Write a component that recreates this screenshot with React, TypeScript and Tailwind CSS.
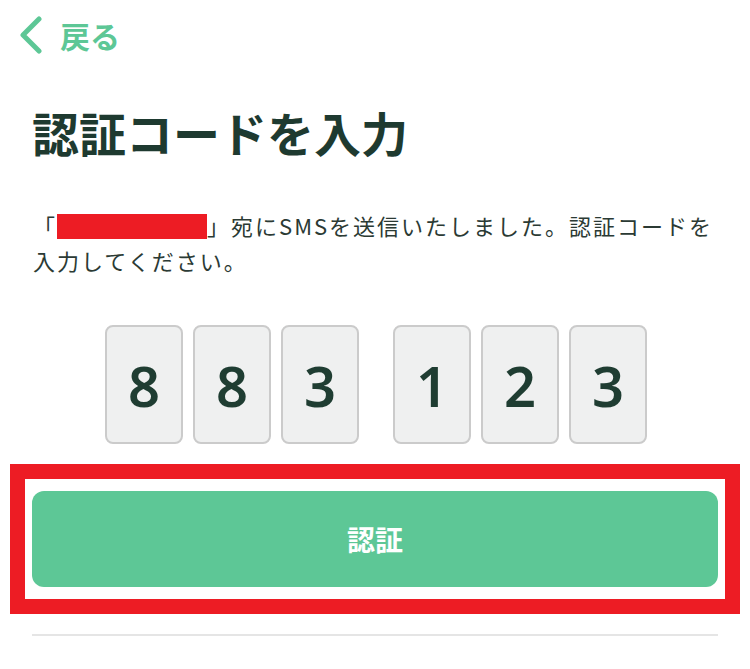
import React from "react";

const JP = { fontFamily: '"Noto Sans CJK JP", "Noto Sans", sans-serif' };

export default function App() {
  const first = ["8", "8", "3"];
  const second = ["1", "2", "3"];

  const DigitBox = ({ d }: { d: string }) => (
    <div
      className="w-[78px] h-[119px] bg-[#eff0f0] border-2 border-[#cbcbcb] rounded-[8px] flex items-center justify-center text-[56px] font-semibold text-[#1f3d32]"
      style={{ fontFamily: '"Noto Sans", sans-serif' }}
    >
      {d}
    </div>
  );

  return (
    <div className="w-[750px] h-[669px] bg-white overflow-hidden" style={JP}>
      {/* back */}
      <div className="flex items-center h-[70px] pl-[18px] gap-[16px]">
        <svg width="26" height="38" viewBox="0 0 26 38">
          <path d="M21 3 L5 19 L21 35" fill="none" stroke="#5dc796" strokeWidth="5" strokeLinecap="round" strokeLinejoin="round" />
        </svg>
        <span className="text-[30px] font-bold text-[#5dc796] leading-none">戻る</span>
      </div>

      {/* title */}
      <h1 className="mt-[34px] pl-[32px] text-[47px] font-bold text-[#1e3a30] leading-[56px]">認証コードを入力</h1>

      {/* message */}
      <p className="mt-[48px] px-[33px] text-[22px] leading-[35px] text-[#2b3a34] tracking-[2px] whitespace-nowrap">
        「<span className="inline-block w-[150px] h-[25px] bg-[#ed1c24] align-[-4px]"></span>」宛にSMSを送信いたしました。認証コードを
        <br />
        入力してください。
      </p>

      {/* code boxes */}
      <div className="mt-[47px] flex justify-center gap-[34px] pl-[2px]">
        <div className="flex gap-[10px]">
          {first.map((d, i) => (
            <DigitBox key={i} d={d} />
          ))}
        </div>
        <div className="flex gap-[10px]">
          {second.map((d, i) => (
            <DigitBox key={i} d={d} />
          ))}
        </div>
      </div>

      {/* button in highlight frame */}
      <div className="mt-[20px] mx-[10px] border-[15px] border-[#ed1c24] px-[7px] py-[12px]">
        <button className="w-full h-[96px] bg-[#5dc796] rounded-[12px] text-white text-[28px] font-bold">
          認証
        </button>
      </div>

      <div className="mt-[20px] mx-[32px] h-[2px] bg-[#e5e5e5]"></div>
    </div>
  );
}
